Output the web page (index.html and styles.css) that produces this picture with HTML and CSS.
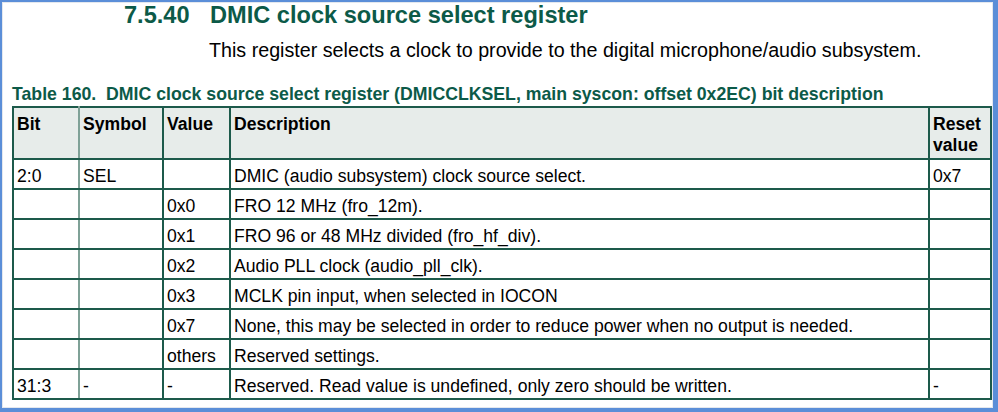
FILE: index.html
```html
<!DOCTYPE html>
<html>
<head>
<meta charset="utf-8">
<link rel="stylesheet" href="styles.css">
</head>
<body>
<div class="frame">
  <h2 class="title"><span class="num">7.5.40</span>DMIC clock source select register</h2>
  <p class="intro">This register selects a clock to provide to the digital microphone/audio subsystem.</p>
  <div class="caption">Table 160.&nbsp; DMIC clock source select register (DMICCLKSEL, main syscon: offset 0x2EC) bit description</div>
  <table class="reg">
    <colgroup>
      <col class="c-bit"><col class="c-sym"><col class="c-val"><col class="c-desc"><col class="c-rst">
    </colgroup>
    <thead>
      <tr><th class="light">Bit</th><th>Symbol</th><th>Value</th><th>Description</th><th>Reset value</th></tr>
    </thead>
    <tbody>
      <tr><td class="light">2:0</td><td>SEL</td><td></td><td>DMIC (audio subsystem) clock source select.</td><td>0x7</td></tr>
      <tr><td class="light"></td><td></td><td>0x0</td><td>FRO 12 MHz (fro_12m).</td><td></td></tr>
      <tr><td class="light"></td><td></td><td>0x1</td><td>FRO 96 or 48 MHz divided (fro_hf_div).</td><td></td></tr>
      <tr><td class="light"></td><td></td><td>0x2</td><td>Audio PLL clock (audio_pll_clk).</td><td></td></tr>
      <tr><td class="light"></td><td></td><td>0x3</td><td>MCLK pin input, when selected in IOCON</td><td></td></tr>
      <tr><td class="light"></td><td></td><td>0x7</td><td>None, this may be selected in order to reduce power when no output is needed.</td><td></td></tr>
      <tr><td class="light"></td><td></td><td>others</td><td>Reserved settings.</td><td></td></tr>
      <tr class="last"><td class="light">31:3</td><td>-</td><td>-</td><td>Reserved. Read value is undefined, only zero should be written.</td><td>-</td></tr>
    </tbody>
  </table>
</div>
</body>
</html>
```

FILE: styles.css
```css
* { box-sizing: border-box; }
html, body { margin: 0; padding: 0; background: #ffffff; }
body { font-family: "Liberation Sans", Arial, sans-serif; color: #000; }

.frame {
  width: 998px;
  height: 412px;
  border-style: solid;
  border-color: #5b8ed8;
  border-width: 2px 5px 4px 2px;
  box-shadow: inset 1px 1px 0 #e4e8ee, inset -1px -1px 0 #e4e8ee;
  padding: 0 0 0 10px;
  overflow: hidden;
}

.title {
  margin: 0;
  padding: 0 0 0 112px;
  font-size: 23.6px;
  line-height: 27px;
  font-weight: bold;
  color: #0c5a48;
}
.title .num { display: inline-block; width: 86px; }

.intro {
  margin: 0;
  padding: 10px 0 0 197px;
  font-size: 19.7px;
  line-height: 23px;
}

.caption {
  padding: 22px 0 0 0;
  font-size: 17.7px;
  line-height: 20px;
  font-weight: bold;
  color: #0c5a48;
}

.reg {
  margin-top: 2px;
  border-collapse: collapse;
  width: 978px;
  table-layout: fixed;
  font-size: 17.6px;
  line-height: 20px;
}
.c-bit { width: 66px; }
.c-sym { width: 84px; }
.c-val { width: 67px; }
.c-desc { width: 699px; }
.c-rst { width: 62px; }

.reg th, .reg td {
  border: 2px solid #1d5a4b;
  padding: 6px 3px 2px 3px;
  text-align: left;
  vertical-align: top;
}
.reg th {
  background: #e7ecea;
  font-weight: bold;
  height: 51px;
  line-height: 21px;
}
.reg td { height: 29.75px; }
.reg .light { border-right-color: #7fa197; }
.reg tbody td { border-top-color: #3f7466; }
.reg tbody tr:first-child td { border-top-color: #1d5a4b; }
.reg tr.last td { border-top-color: #1d5a4b; }
```
